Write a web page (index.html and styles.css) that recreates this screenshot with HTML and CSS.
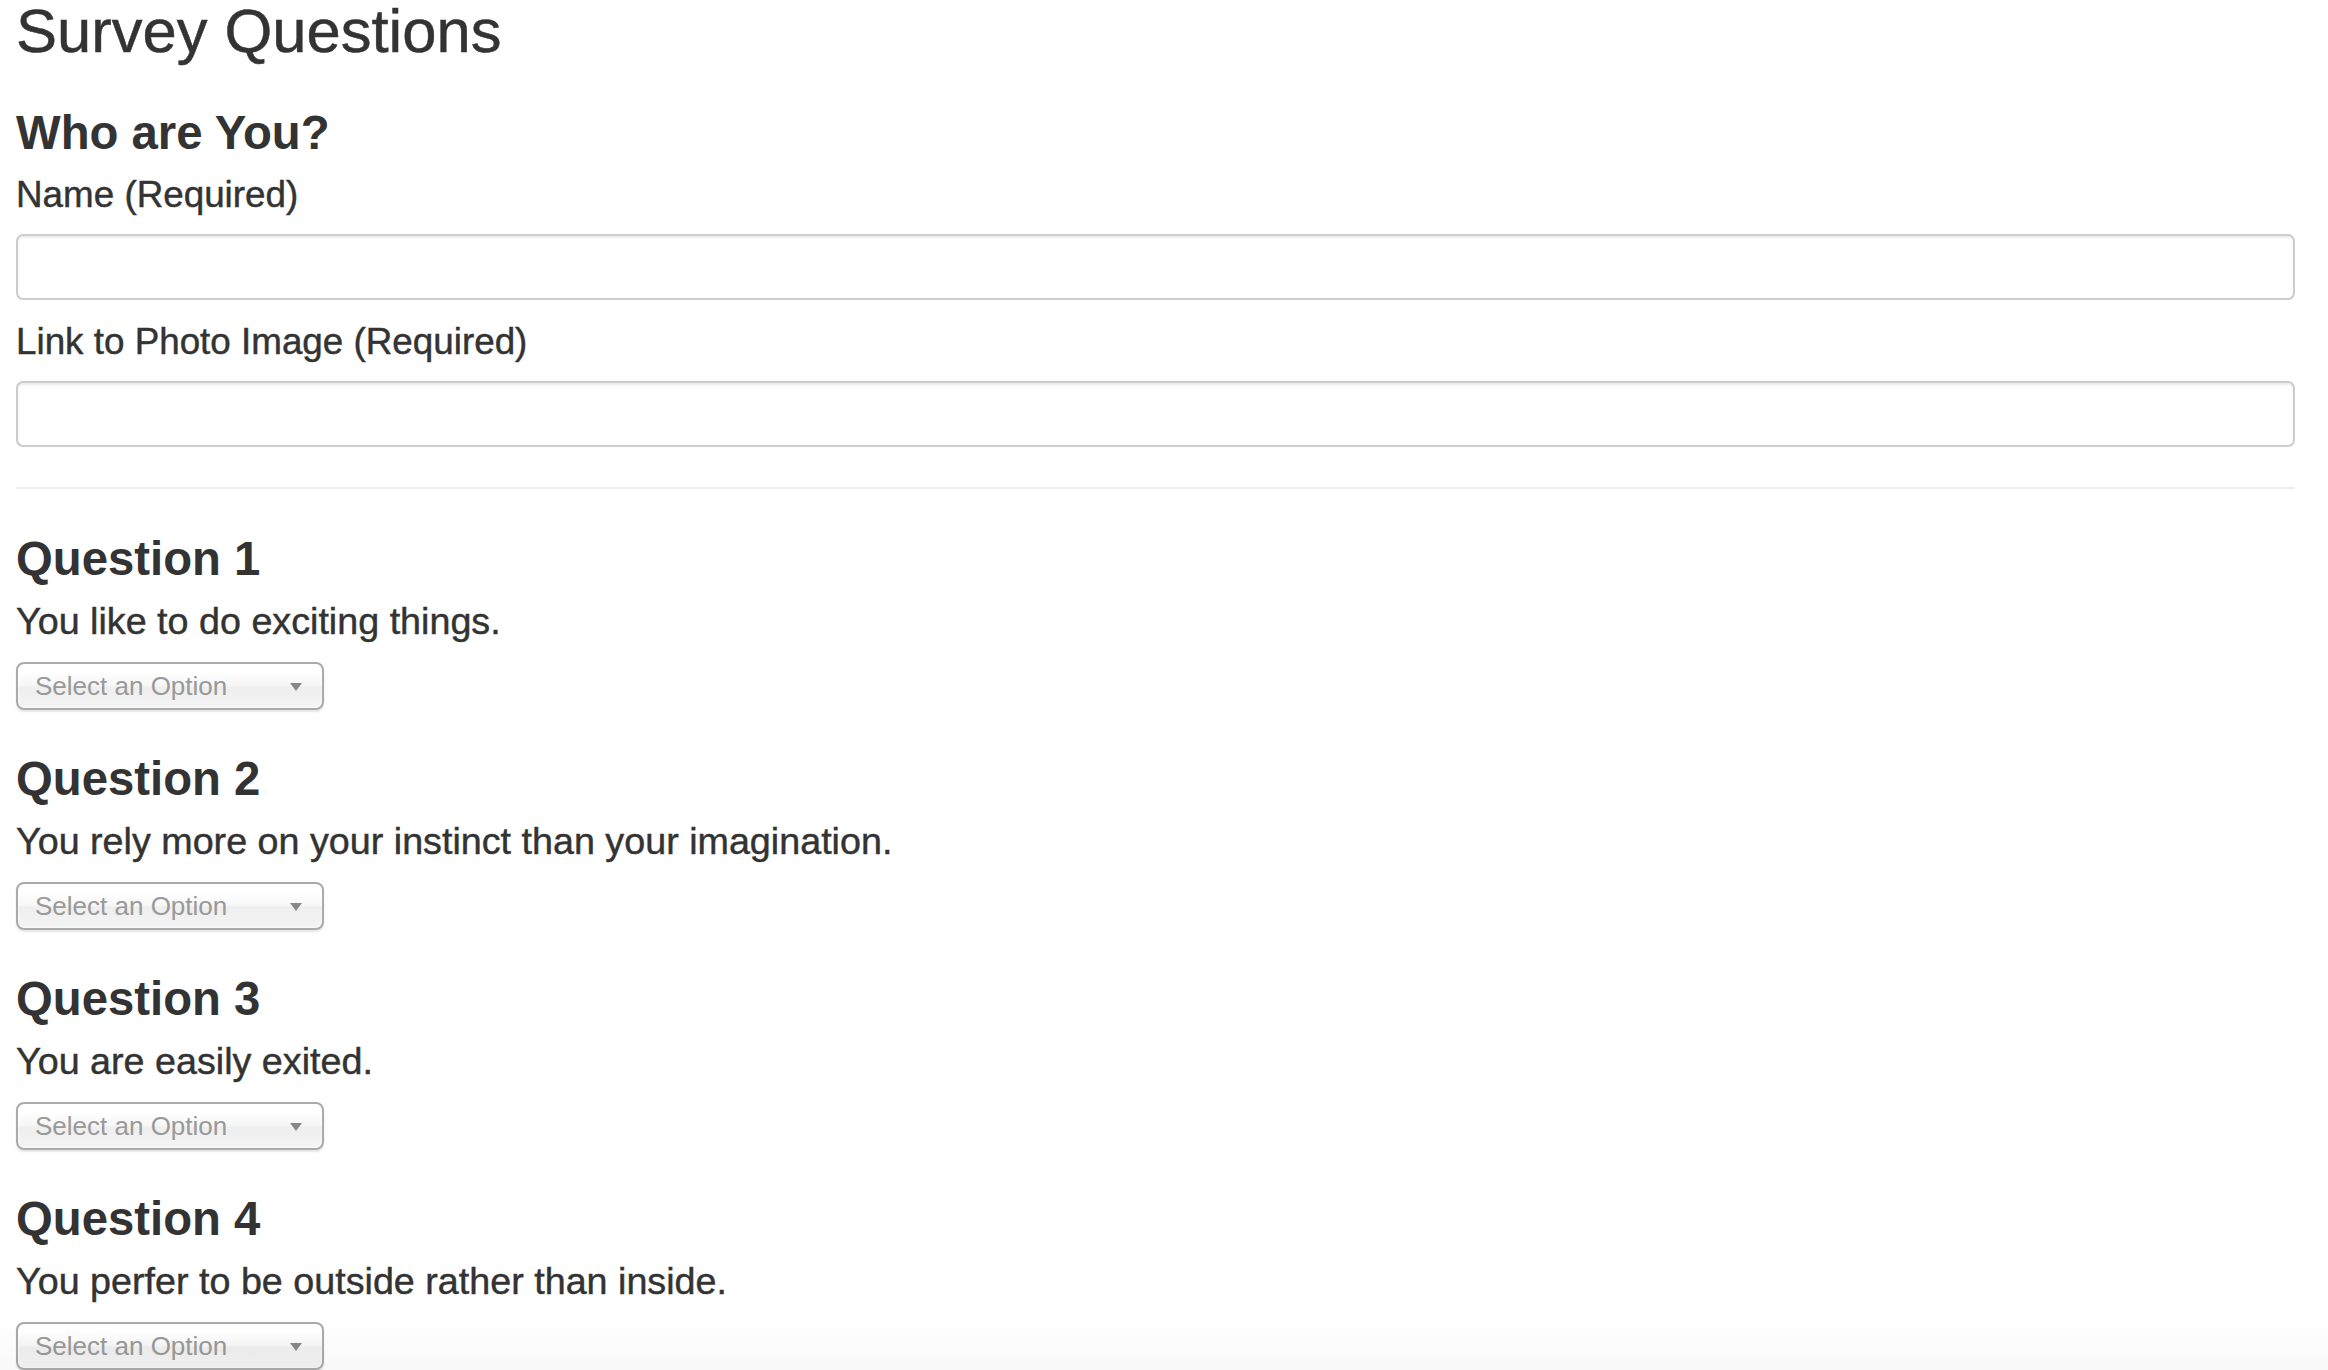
FILE: index.html
```html
<!DOCTYPE html>
<html lang="en">
<head>
<meta charset="utf-8">
<title>Survey Questions</title>
<link rel="stylesheet" href="styles.css">
</head>
<body>
<div class="container">
  <h1 class="page-title">Survey Questions</h1>

  <h3 class="section-title">Who are You?</h3>
  <div class="form-group">
    <label class="field-label" for="name">Name (Required)</label>
    <input class="text-input" id="name" type="text">
  </div>
  <div class="form-group">
    <label class="field-label" for="photo">Link to Photo Image (Required)</label>
    <input class="text-input" id="photo" type="text">
  </div>

  <hr class="divider">

  <div class="question">
    <h3 class="section-title">Question 1</h3>
    <p class="question-text">You like to do exciting things.</p>
    <div class="chosen-single"><span class="chosen-placeholder">Select an Option</span><svg class="chosen-arrow" width="12" height="8" viewBox="0 0 12 8"><path d="M0 0H12L6 8Z"/></svg></div>
  </div>

  <div class="question">
    <h3 class="section-title">Question 2</h3>
    <p class="question-text">You rely more on your instinct than your imagination.</p>
    <div class="chosen-single"><span class="chosen-placeholder">Select an Option</span><svg class="chosen-arrow" width="12" height="8" viewBox="0 0 12 8"><path d="M0 0H12L6 8Z"/></svg></div>
  </div>

  <div class="question">
    <h3 class="section-title">Question 3</h3>
    <p class="question-text">You are easily exited.</p>
    <div class="chosen-single"><span class="chosen-placeholder">Select an Option</span><svg class="chosen-arrow" width="12" height="8" viewBox="0 0 12 8"><path d="M0 0H12L6 8Z"/></svg></div>
  </div>

  <div class="question">
    <h3 class="section-title">Question 4</h3>
    <p class="question-text">You perfer to be outside rather than inside.</p>
    <div class="chosen-single"><span class="chosen-placeholder">Select an Option</span><svg class="chosen-arrow" width="12" height="8" viewBox="0 0 12 8"><path d="M0 0H12L6 8Z"/></svg></div>
  </div>
</div>
<div class="bottom-fade"></div>
</body>
</html>
```

FILE: styles.css
```css
html, body {
  margin: 0;
  padding: 0;
  background: #fff;
}

body {
  font-family: "Liberation Sans", Arial, Helvetica, sans-serif;
  color: #333;
}

.container {
  padding: 0 33px 0 16px;
}

.page-title {
  margin: 0;
  font-size: 61.5px;
  font-weight: 400;
  line-height: 62px;
  -webkit-text-stroke: 0.5px #333;
}

.section-title {
  margin: 45px 0 0;
  font-size: 47.3px;
  font-weight: 700;
  line-height: 52px;
}

.form-group {
  margin-top: 14px;
}

.form-group + .form-group {
  margin-top: 20px;
}

.field-label {
  display: block;
  font-size: 36.8px;
  font-weight: 400;
  line-height: 44px;
  margin-bottom: 17px;
  -webkit-text-stroke: 0.45px #333;
}

.text-input {
  display: block;
  box-sizing: border-box;
  width: 100%;
  height: 66px;
  margin: 0;
  padding: 0 18px;
  border: 2px solid #ccc;
  border-radius: 7px;
  background: #fff;
  box-shadow: inset 0 2px 2px rgba(0, 0, 0, 0.075);
  font: inherit;
  font-size: 26px;
  outline: none;
}

.divider {
  margin: 40px 0 0;
  border: 0;
  border-top: 2px solid #eee;
  height: 0;
}

.question .section-title {
  margin-top: 0;
}

.divider + .question {
  margin-top: 44px;
}

.question + .question {
  margin-top: 43px;
}

.question-text {
  margin: 14px 0 0;
  font-size: 37.7px;
  line-height: 44px;
  -webkit-text-stroke: 0.45px #333;
}

.chosen-single {
  box-sizing: border-box;
  width: 308px;
  height: 48px;
  margin-top: 19px;
  padding: 0 20px 0 17px;
  display: flex;
  align-items: center;
  justify-content: space-between;
  border: 2px solid #aaa;
  border-radius: 8px;
  background: linear-gradient(to bottom, #fff 20%, #f6f6f6 50%, #eee 52%, #f4f4f4 100%);
  box-shadow: inset 0 0 3px #fff, 0 2px 2px rgba(0, 0, 0, 0.1);
}

.chosen-placeholder {
  font-size: 26px;
  color: #999;
  line-height: 30px;
}

.chosen-arrow {
  fill: #888;
  margin-top: 1px;
}

.bottom-fade {
  position: fixed;
  left: 0;
  right: 0;
  bottom: 0;
  height: 50px;
  pointer-events: none;
  background: linear-gradient(to bottom, rgba(0, 0, 0, 0), rgba(0, 0, 0, 0.025));
}
```
